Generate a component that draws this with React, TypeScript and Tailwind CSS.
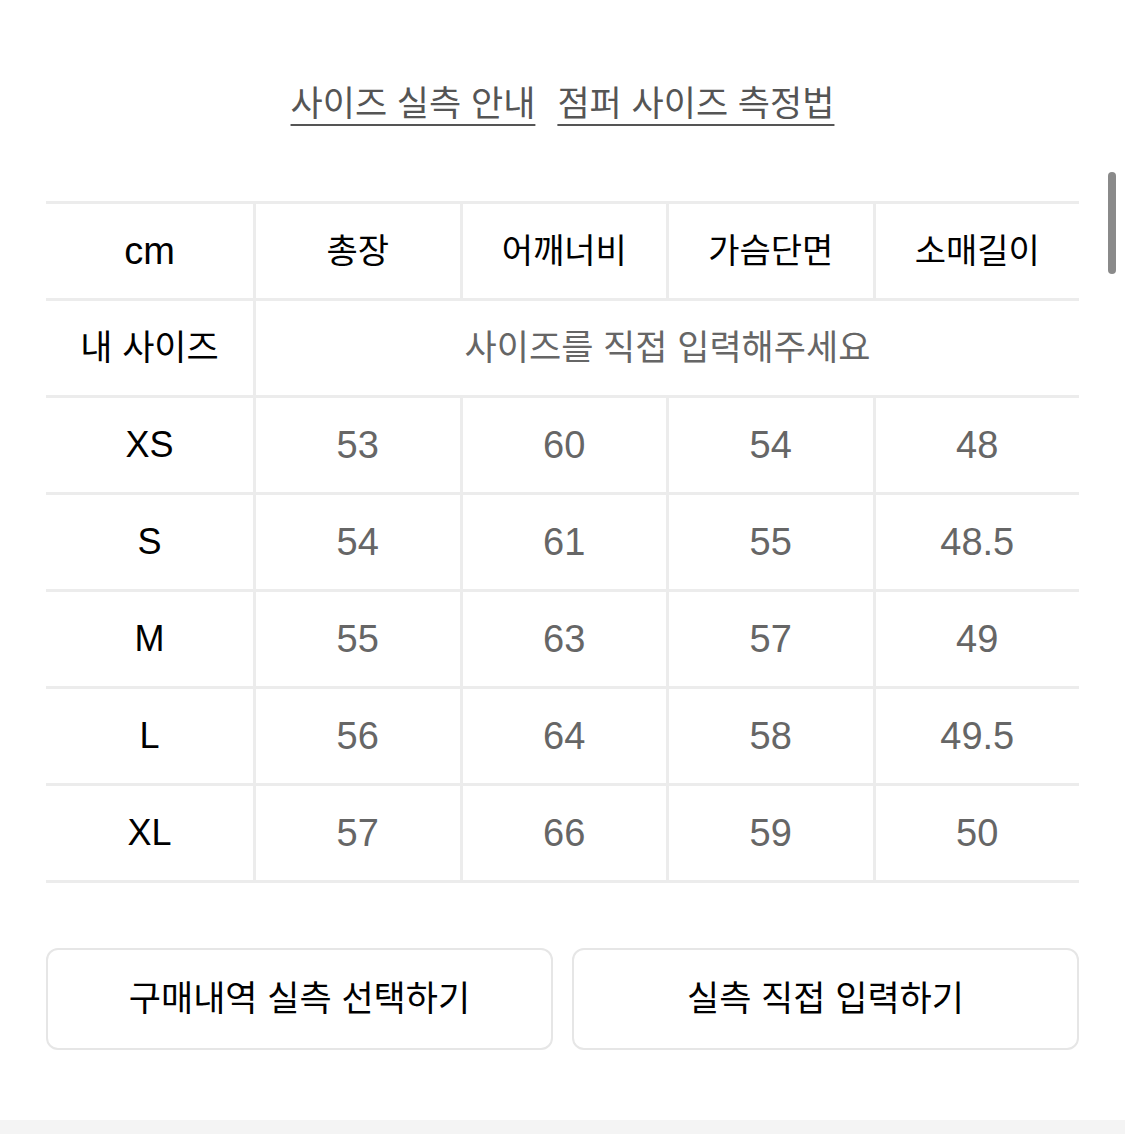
import React from "react";

const font = { fontFamily: '"Liberation Sans", "Noto Sans CJK KR", sans-serif' };

const headers = ["총장", "어깨너비", "가슴단면", "소매길이"];
const rows: [string, string[]][] = [
  ["XS", ["53", "60", "54", "48"]],
  ["S", ["54", "61", "55", "48.5"]],
  ["M", ["55", "63", "57", "49"]],
  ["L", ["56", "64", "58", "49.5"]],
  ["XL", ["57", "66", "59", "50"]],
];

export default function App() {
  return (
    <div className="relative w-[1125px] h-[1134px] bg-white overflow-hidden" style={font}>
      {/* links */}
      <div className="pt-[79px] flex justify-center gap-[22px] text-[35px] leading-[50px] text-[#555]">
        <span className="underline decoration-2 underline-offset-[8px] decoration-[#555]">사이즈 실측 안내</span>
        <span className="underline decoration-2 underline-offset-[8px] decoration-[#555]">점퍼 사이즈 측정법</span>
      </div>

      {/* table */}
      <div className="mt-[72px] mx-[46px] w-[1033px] border-t-[3px] border-[#ececec]">
        <div className="flex h-[97px] border-b-[3px] border-[#ececec]">
          <div className="w-[207px] flex items-center justify-center text-[38px] text-black">cm</div>
          {headers.map((h) => (
            <div
              key={h}
              className="flex-1 border-l-[3px] border-[#ececec] flex items-center justify-center text-[34px] text-black"
            >
              {h}
            </div>
          ))}
        </div>
        <div className="flex h-[97px] border-b-[3px] border-[#ececec]">
          <div className="w-[207px] flex items-center justify-center text-[35px] text-black">내 사이즈</div>
          <div className="flex-1 border-l-[3px] border-[#ececec] flex items-center justify-center text-[35px] text-[#666]">
            사이즈를 직접 입력해주세요
          </div>
        </div>
        {rows.map(([label, vals]) => (
          <div key={label} className="flex h-[97px] border-b-[3px] border-[#ececec]">
            <div className="w-[207px] flex items-center justify-center text-[36px] text-black">{label}</div>
            {vals.map((v, i) => (
              <div
                key={i}
                className="flex-1 border-l-[3px] border-[#ececec] flex items-center justify-center text-[38px] text-[#666]"
              >
                {v}
              </div>
            ))}
          </div>
        ))}
      </div>

      {/* buttons */}
      <div className="mt-[65px] mx-[46px] w-[1033px] flex gap-[19px]">
        <button className="flex-1 h-[102px] border-2 border-[#e6e6e6] rounded-[12px] bg-white text-[35px] text-black">
          구매내역 실측 선택하기
        </button>
        <button className="flex-1 h-[102px] border-2 border-[#e6e6e6] rounded-[12px] bg-white text-[35px] text-black">
          실측 직접 입력하기
        </button>
      </div>

      {/* bottom strip */}
      <div className="absolute left-0 right-0 bottom-0 h-[14px] bg-[#f4f4f4]" />

      {/* scrollbar */}
      <div className="absolute left-[1108px] top-[172px] w-[8px] h-[102px] rounded-full bg-[#8a8a8a]" />
    </div>
  );
}
